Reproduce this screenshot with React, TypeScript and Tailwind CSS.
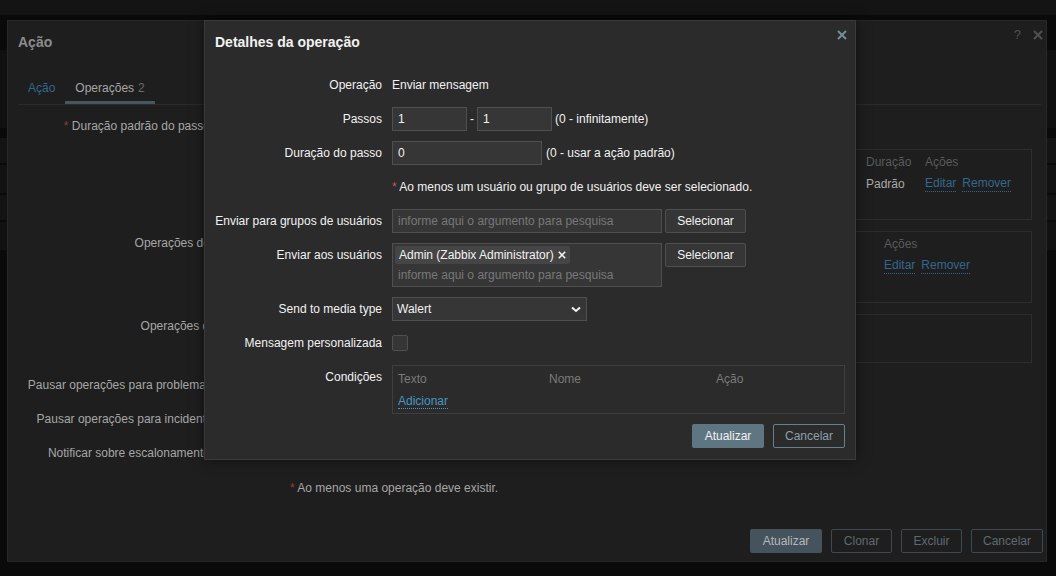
import React from "react";

const font = "font-['Liberation_Sans',Arial,sans-serif]";

function XIcon({ className, size = 10 }: { className?: string; size?: number }) {
  return (
    <svg width={size} height={size} viewBox="0 0 10 10" className={className}>
      <path d="M1 1 L9 9 M9 1 L1 9" stroke="currentColor" strokeWidth="2" strokeLinecap="butt" />
    </svg>
  );
}

function OuterRow({ label, req, className, children }: { label?: string; req?: boolean; className?: string; children?: React.ReactNode }) {
  return (
    <div className={"flex gap-[10px] " + (className ?? "")}>
      <div className="w-[262px] shrink-0 text-right leading-[24px] whitespace-nowrap text-[#a6a6a6]">
        {req && <span className="text-[#8a3f3f]">* </span>}
        {label}
      </div>
      <div className="flex-1">{children}</div>
    </div>
  );
}

function DimLink({ children }: { children: React.ReactNode }) {
  return <span className="border-b border-dotted border-[#32688f] text-[#32688f] leading-[14px]">{children}</span>;
}

function OuterModal() {
  return (
    <div className="absolute left-[7px] top-[20px] flex h-[542px] w-[1040px] flex-col border border-[#282828] bg-[#1e1e1e] text-[12px]">
      {/* header */}
      <div className="flex h-[43px] items-center justify-between pl-[10px] pr-[3px]">
        <div className="text-[14px] font-bold text-[#8c8c8c]">Ação</div>
        <div className="mb-[15px] flex items-center gap-[12px] text-[#505050]">
          <span className="text-[13px]">?</span>
          <XIcon size={10} />
        </div>
      </div>
      {/* tabs */}
      <div className="mx-[10px] mr-[5px] mt-[4px] flex h-[37px] border-b border-[#2a2a2a]">
        <div className="flex items-center px-[10px] pt-[4px] text-[#32688f]">Ação</div>
        <div className="flex items-center border-b-[3px] border-[#48565f] px-[10px] pt-[7px] text-[#a6a6a6]">
          Operações <span className="ml-[4px] text-[#6a6a6a]">2</span>
        </div>
      </div>
      {/* form */}
      <div className="flex flex-col px-[10px]">
        <OuterRow label="Duração padrão do passo de operação" req className="mt-[9px] h-[24px]">
          <div className="h-[24px] w-[150px] border border-[#363636] bg-[#262626] px-[5px] leading-[22px] text-[#a6a6a6]">1h</div>
        </OuterRow>
        <OuterRow label="Operações" className="mt-[11px]">
          <div className="h-[71px] w-[742px] border border-[#2d2d2d] px-[5px] pt-[4px] leading-[16px]">
            <div className="grid grid-cols-[60px_400px_110px_59px_1fr] gap-y-[6px]">
              <span className="text-[#5b5b5b]">Passos</span>
              <span className="text-[#5b5b5b]">Detalhes</span>
              <span className="text-[#5b5b5b]">Início em</span>
              <span className="text-[#5b5b5b]">Duração</span>
              <span className="text-[#5b5b5b]">Ações</span>
              <span className="text-[#a9a9a9]">1</span>
              <span className="text-[#a9a9a9]">Enviar mensagem para usuários: Admin (Zabbix Administrator)</span>
              <span className="text-[#a9a9a9]">Imediatamente</span>
              <span className="text-[#a9a9a9]">Padrão</span>
              <span className="flex gap-[6px]">
                <DimLink>Editar</DimLink>
                <DimLink>Remover</DimLink>
              </span>
            </div>
            <div className="mt-[6px]">
              <DimLink>Adicionar</DimLink>
            </div>
          </div>
        </OuterRow>
        <OuterRow label="Operações de recuperação" className="mt-[11px]">
          <div className="h-[72px] w-[742px] border border-[#2d2d2d] px-[5px] pt-[4px] leading-[16px]">
            <div className="grid grid-cols-[588px_1fr] gap-y-[6px]">
              <span className="text-[#5b5b5b]">Detalhes</span>
              <span className="text-[#5b5b5b]">Ações</span>
              <span className="text-[#a9a9a9]">Notificar todos os envolvidos</span>
              <span className="flex gap-[6px]">
                <DimLink>Editar</DimLink>
                <DimLink>Remover</DimLink>
              </span>
            </div>
            <div className="mt-[6px]">
              <DimLink>Adicionar</DimLink>
            </div>
          </div>
        </OuterRow>
        <OuterRow label="Operações de atualização" className="mt-[11px]">
          <div className="h-[49px] w-[742px] border border-[#2d2d2d] px-[5px] pt-[4px] leading-[16px]">
            <div className="text-[#5b5b5b]">Detalhes</div>
            <div className="mt-[6px]">
              <DimLink>Adicionar</DimLink>
            </div>
          </div>
        </OuterRow>
        <OuterRow label="Pausar operações para problemas de sintomas" className="mt-[10px] h-[24px]" />
        <OuterRow label="Pausar operações para incidentes suprimidos" className="mt-[10px] h-[24px]" />
        <OuterRow label="Notificar sobre escalonamentos cancelados" className="mt-[10px] h-[24px]" />
        <OuterRow className="mt-[11px] h-[24px]">
          <div className="leading-[24px] text-[#a6a6a6]">
            <span className="text-[#8a3f3f]">*</span> Ao menos uma operação deve existir.
          </div>
        </OuterRow>
      </div>
      {/* footer */}
      <div className="mt-auto flex justify-end gap-[9px] pb-[8px] pr-[3px]">
        <div className="flex h-[24px] w-[72px] items-center justify-center rounded-[2px] bg-[#45535c] text-[#b4b8bb]">Atualizar</div>
        <div className="flex h-[24px] w-[61px] items-center justify-center rounded-[2px] border border-[#3d4850] text-[#5e6a71]">Clonar</div>
        <div className="flex h-[24px] w-[61px] items-center justify-center rounded-[2px] border border-[#3d4850] text-[#5e6a71]">Excluir</div>
        <div className="flex h-[24px] w-[72px] items-center justify-center rounded-[2px] border border-[#3d4850] text-[#5e6a71]">Cancelar</div>
      </div>
    </div>
  );
}

function Row({ label, className, children }: { label?: string; className?: string; children?: React.ReactNode }) {
  return (
    <div className={"flex gap-[10px] " + (className ?? "")}>
      <div className="w-[167px] shrink-0 text-right leading-[24px] whitespace-nowrap text-[#f2f2f2]">{label}</div>
      <div className="flex min-w-0 flex-1 items-start">{children}</div>
    </div>
  );
}

const boxCls = "h-[24px] border border-[#4f4f4f] bg-[#363636] px-[5px] leading-[22px]";
const btnSec = "flex h-[24px] w-[81px] items-center justify-center rounded-[2px] border border-[#4f4f4f] bg-[#363636] text-[#f2f2f2]";

function InnerModal() {
  return (
    <div className="absolute left-[204px] top-[20px] flex h-[440px] w-[652px] flex-col border border-[#3a3a3a] bg-[#2b2b2b] text-[12px] text-[#f2f2f2] shadow-[0_0_12px_rgba(0,0,0,0.5)]">
      <div className="flex h-[43px] items-center justify-between pl-[10px] pr-[8px]">
        <div className="text-[14px] font-bold text-[#f2f2f2]">Detalhes da operação</div>
        <XIcon className="mb-[15px] text-[#768d9a]" size={10} />
      </div>
      <div className="flex flex-col px-[10px]">
        <Row label="Operação" className="mt-[9px] h-[24px]">
          <span className="leading-[24px]">Enviar mensagem</span>
        </Row>
        <Row label="Passos" className="mt-[10px] h-[24px]">
          <div className={boxCls + " w-[75px] text-[#f2f2f2]"}>1</div>
          <span className="ml-[3px] mr-[2px] w-[5px] leading-[24px]">-</span>
          <div className={boxCls + " w-[75px] text-[#f2f2f2]"}>1</div>
          <span className="ml-[3px] leading-[24px]">(0 - infinitamente)</span>
        </Row>
        <Row label="Duração do passo" className="mt-[10px] h-[24px]">
          <div className={boxCls + " w-[150px] text-[#f2f2f2]"}>0</div>
          <span className="ml-[4px] leading-[24px]">(0 - usar a ação padrão)</span>
        </Row>
        <Row className="mt-[10px] h-[24px]">
          <span className="leading-[24px]">
            <span className="text-[#c7584f]">*</span> Ao menos um usuário ou grupo de usuários deve ser selecionado.
          </span>
        </Row>
        <Row label="Enviar para grupos de usuários" className="mt-[10px] h-[24px]">
          <div className={boxCls + " w-[270px] text-[#787878]"}>informe aqui o argumento para pesquisa</div>
          <div className={btnSec + " ml-[3px]"}>Selecionar</div>
        </Row>
        <Row label="Enviar aos usuários" className="mt-[10px] h-[44px]">
          <div className="h-[44px] w-[270px] border border-[#4f4f4f] bg-[#363636] px-[2px] pt-[2px]">
            <div className="inline-flex h-[18px] items-center gap-[4px] rounded-[2px] bg-[#454545] px-[4px] text-[#f2f2f2]">
              Admin (Zabbix Administrator)
              <XIcon size={8} className="text-[#f2f2f2]" />
            </div>
            <div className="px-[3px] pt-[3px] leading-[16px] text-[#787878]">informe aqui o argumento para pesquisa</div>
          </div>
          <div className={btnSec + " ml-[3px]"}>Selecionar</div>
        </Row>
        <Row label="Send to media type" className="mt-[10px] h-[24px]">
          <div className="flex h-[24px] w-[195px] items-center justify-between border border-[#4f4f4f] bg-[#363636] pl-[4px] pr-[5px]">
            <span>Walert</span>
            <svg width="10" height="7" viewBox="0 0 10 7">
              <path d="M1 1.5 L5 5 L9 1.5" stroke="#f2f2f2" strokeWidth="2" fill="none" />
            </svg>
          </div>
        </Row>
        <Row label="Mensagem personalizada" className="mt-[10px] h-[24px]">
          <div className="mt-[4px] h-[16px] w-[16px] rounded-[2px] border border-[#4f4f4f] bg-[#363636]" />
        </Row>
        <Row label="Condições" className="mt-[10px] h-[49px]">
          <div className="h-[49px] w-[453px] border border-[#3f3f3f] px-[5px] pt-[5px] leading-[16px]">
            <div className="grid grid-cols-[151px_167px_1fr] text-[#7a7a7a]">
              <span>Texto</span>
              <span>Nome</span>
              <span>Ação</span>
            </div>
            <div className="mt-[6px]">
              <span className="border-b border-dotted border-[#4796c4] text-[#4796c4]">Adicionar</span>
            </div>
          </div>
        </Row>
      </div>
      <div className="mt-auto flex justify-end gap-[9px] pb-[11px] pr-[10px]">
        <div className="flex h-[24px] w-[72px] items-center justify-center rounded-[2px] bg-[#5e7682] text-[#f2f2f2]">Atualizar</div>
        <div className="flex h-[24px] w-[72px] items-center justify-center rounded-[2px] border border-[#687f8c] text-[#8ea0aa]">Cancelar</div>
      </div>
    </div>
  );
}

export default function App() {
  return (
    <div className={"relative h-[576px] w-[1056px] overflow-hidden bg-[#0a0a0a] " + font}>
      {/* page behind the overlay */}
      <div className="flex flex-col">
        <div className="h-[15px] bg-[#141414]" />
        <div className="mt-[35px] h-[78px] bg-[#101010]" />
        <div className="mt-[10px] h-[25px] bg-[#141414]" />
        <div className="mt-[2px] h-[28px] bg-[#121212]" />
        <div className="mt-[2px] h-[25px] bg-[#131313]" />
        <div className="mt-[2px] h-[28px] bg-[#111111]" />
      </div>
      <OuterModal />
      <InnerModal />
    </div>
  );
}
